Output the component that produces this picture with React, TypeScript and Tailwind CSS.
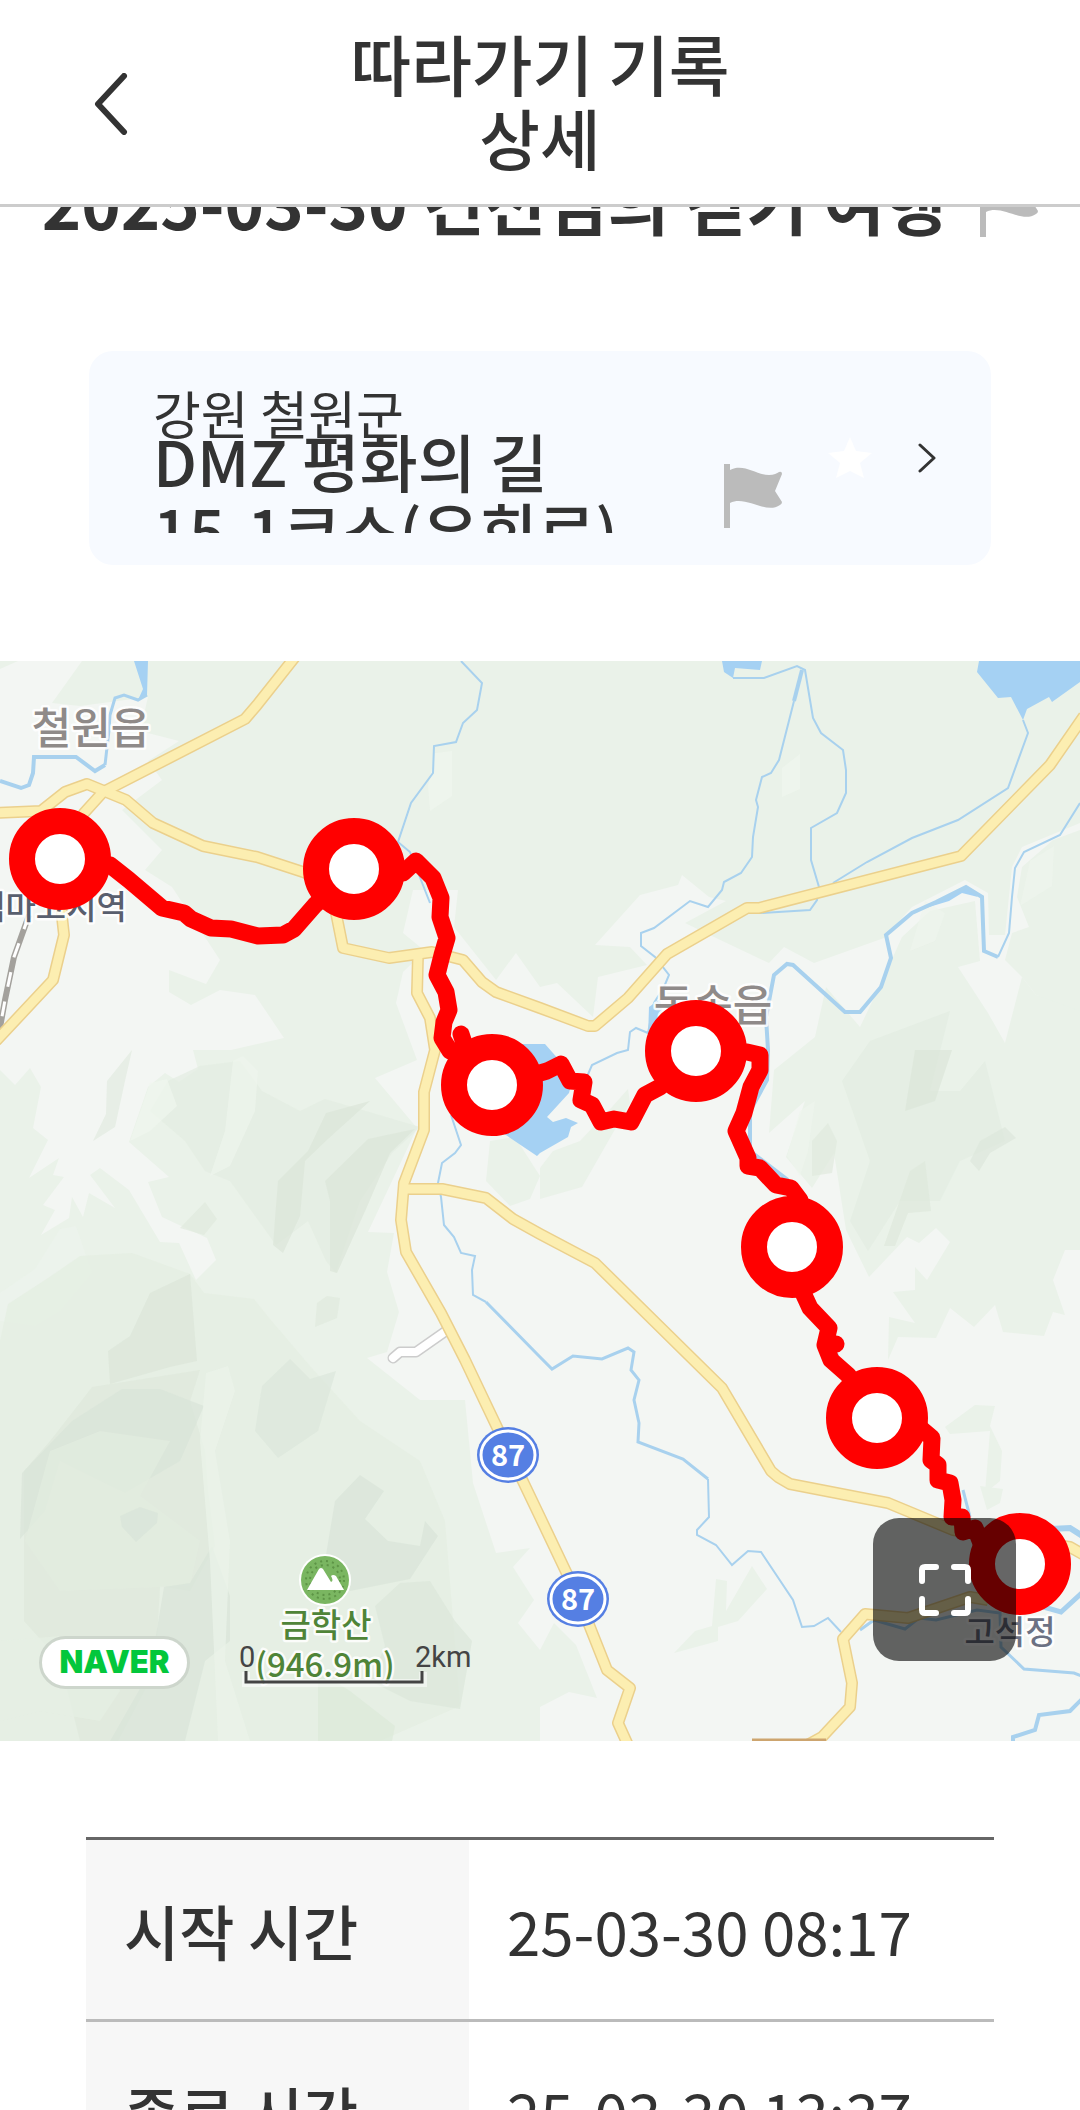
import React from "react";

const hills = [
    { fill: "#e3ece1", d: "M150,450 L168,420 L200,405 L240,400 L262,430 L300,450 L325,438 L420,466 L392,492 L360,540 L336,612 L326,600 L308,560 L276,584 L230,520 L205,510 L185,480 Z" },
    { fill: "#dbe6d9", d: "M308,490 L326,452 L370,440 L328,478 L305,500 L300,555 L283,592 L273,584 L278,520 Z" },
    { fill: "#dbe6d9", d: "M325,520 L368,478 L415,468 L390,492 L366,548 L337,612 L330,610 L330,540 Z" },
    { fill: "#e1ebdf", d: "M132,389 L107,420 L106,453 L93,480 L115,466 L125,420 Z" },
    { fill: "#dfe9dd", d: "M180,567 L205,541 L217,558 L204,574 Z" },
    { fill: "#dfe9dd", d: "M317,642 L327,635 L340,637 L337,657 L315,666 Z" },
    { fill: "#f0f6ee", d: "M130,480 L150,422 L167,418 L177,445 L150,470 Z" },
    { fill: "#eef5ec", d: "M233,400 L243,395 L258,410 L255,450 L230,505 L210,515 L225,470 Z" },
    { fill: "#edf4ec", d: "M0,632 L35,608 L60,568 L76,565 L92,612 L60,650 L35,665 L0,660 Z" },
    { fill: "#e4eee1", d: "M8,643 L48,617 L80,595 L132,592 L190,613 L204,632 L254,638 L270,658 L310,705 L360,760 L420,800 L445,860 L460,1045 L380,1080 L0,1080 L0,680 Z" },
    { fill: "#dbe6d9", d: "M150,632 L190,613 L197,700 L170,706 L110,723 L108,690 L130,675 Z" },
    { fill: "#dee8dc", d: "M82,739 L92,726 L200,709 L190,740 L205,790 L208,830 L215,885 L190,930 L160,925 L155,1010 L118,1080 L80,1080 L60,1000 L24,960 L24,810 L50,780 Z" },
    { fill: "#d9e4d8", d: "M22,812 L72,760 L122,728 L160,728 L204,745 L180,800 L125,832 L90,815 L60,800 L45,850 L20,878 Z" },
    { fill: "#e2ece0", d: "M50,790 L100,770 L170,780 L140,835 L200,880 L190,925 L60,930 L25,880 Z" },
    { fill: "#d9e4d8", d: "M120,855 L140,846 L158,852 L157,862 L136,881 L122,866 Z" },
    { fill: "#d9e4d8", d: "M164,926 L190,922 L212,885 L230,935 L230,980 L205,1000 L185,1080 L110,1080 L150,1010 Z" },
    { fill: "#e6efe4", d: "M0,980 L60,975 L110,1000 L120,1030 L100,1060 L40,1050 L0,1060 Z" },
    { fill: "#ebf4ea", d: "M206,712 L228,705 L235,730 L215,790 L230,880 L225,1000 L250,1080 L218,1080 L210,900 L200,780 Z" },
    { fill: "#dce7db", d: "M262,725 L290,698 L310,718 L336,710 L318,770 L278,797 L255,770 Z" },
    { fill: "#d9e4d8", d: "M335,840 L360,814 L384,830 L365,858 L388,880 L420,885 L425,860 L438,875 L410,918 L350,930 L325,900 Z" },
    { fill: "#dce7da", d: "M375,945 L400,922 L430,920 L455,960 L472,980 L460,1048 L410,1040 L370,1020 L385,985 Z" },
    { fill: "#dbe9d8", d: "M318,1010 L350,1030 L395,1065 L392,1080 L318,1080 Z" },
    { fill: "#e3ece1", d: "M842,420 L870,380 L950,350 L930,430 L960,430 L985,400 L1005,480 L960,500 L940,540 L900,540 L868,590 L850,560 L870,500 Z" },
    { fill: "#dbe6d9", d: "M905,450 L915,389 L952,389 L935,440 Z" },
    { fill: "#dee8dc", d: "M884,585 L910,510 L925,500 L931,550 L908,552 L895,585 Z" },
    { fill: "#dde7db", d: "M970,500 L980,480 L1005,466 L1016,477 L990,492 L979,510 Z" },
    { fill: "#dfe9dd", d: "M812,480 L828,462 L837,480 L832,512 L812,515 Z" },
    { fill: "#eef5ec", d: "M787,495 L800,450 L815,440 L808,490 L800,515 Z" },
    { fill: "#eef5ec", d: "M925,240 L945,252 L935,280 L910,290 Z" },
    { fill: "#eef5ec", d: "M1030,200 L1054,185 L1052,225 L1020,245 Z" },
    { fill: "#eff6ee", d: "M782,107 L800,93 L800,128 L782,136 Z" },
    { fill: "#eff6ee", d: "M435,92 L452,90 L452,135 L430,150 L428,125 Z" },
];

const greens = [
    "M82,0 L52,42 L80,45 L148,36 L140,70 L179,80 L148,100 L162,119 L122,149 L162,189 L145,209 L172,226 L220,299 L206,323 L169,309 L169,331 L191,344 L220,329 L255,334 L284,377 L231,389 L193,389 L198,408 L179,421 L165,412 L148,426 L129,481 L169,516 L148,521 L162,556 L207,577 L216,599 L196,619 L179,582 L160,581 L129,529 L100,507 L90,514 L115,547 L89,532 L83,556 L72,536 L69,557 L41,574 L55,549 L43,544 L64,516 L53,514 L59,497 L29,517 L48,479 L33,467 L41,426 L30,407 L15,424 L0,409 L0,1080 L540,1080 L540,1046 L569,1031 L597,1037 L576,984 L554,962 L540,989 L518,962 L534,939 L513,906 L530,887 L496,892 L473,822 L465,739 L420,739 L367,697 L387,691 L399,651 L387,611 L394,572 L368,571 L417,467 L375,417 L417,399 L396,342 L403,311 L425,290 L403,272 L413,229 L458,229 L454,266 L496,319 L516,292 L540,326 L557,322 L593,356 L598,316 L647,304 L630,286 L595,284 L640,234 L678,224 L682,214 L709,236 L726,240 L685,262 L714,276 L769,302 L784,286 L814,302 L884,277 L912,246 L965,219 L988,232 L989,274 L1005,274 L1012,206 L1022,186 L1080,162 L1080,0 Z",
    "M902,276 L884,316 L860,366 L826,326 L815,376 L774,409 L769,472 L805,440 L786,496 L812,527 L834,492 L846,569 L869,616 L907,576 L919,582 L936,567 L950,581 L927,619 L915,606 L915,629 L893,631 L915,662 L889,656 L888,699 L898,676 L936,677 L950,647 L974,666 L995,644 L1003,671 L1044,675 L1053,651 L1065,654 L1053,619 L1065,589 L1080,589 L1080,345 L1036,334 L1022,316 L1005,382 L988,352 L958,306 L980,300 L975,240 L930,250 Z",
    "M1080,169 L1053,179 L1022,206 L1017,236 L1029,266 L1012,272 L1005,299 L1022,316 L1036,334 L1080,350 Z",
    "M490,480 L515,476 L540,515 L530,538 L510,545 L486,520 Z",
    "M540,507 L553,490 L580,480 L612,446 L628,428 L630,442 L582,526 L540,538 Z",
    "M716,918 L727,920 L726,950 L752,905 L767,928 L738,960 L718,966 L718,980 L674,992 L695,970 L712,965 Z",
    "M945,766 L975,744 L995,745 L990,765 L1002,790 L1000,820 L985,832 L990,770 L950,773 Z",
    "M980,825 L1003,828 L1000,842 L987,849 Z",
    "M0,8 L18,0 L0,0 Z",
];

const lakes = [
    "M979,0 L977,11 L998,37 L1011,36 L1023,59 L1027,48 L1049,36 L1052,41 L1080,21 L1080,0 Z",
    "M722,0 L762,0 L760,9 L735,7 L733,17 L724,11 Z",
    "M500,400 L516,383 L545,383 L560,400 L572,420 L569,432 L547,456 L553,461 L566,457 L578,462 L571,466 L568,476 L540,492 L537,495 L500,470 Z",
    "M134,0 L148,0 L147,34 L138,39 L143,28 Z",
    "M649,346 L660,338 L664,360 L648,377 Z",
    "M916,250 L966,225 L978,236 L962,232 L949,240 Z",
];

const streams = [
    { w: 3, d: "M147,34 L138,39 L124,34 L115,37 L110,54 L109,69 L105,104" },
    { w: 4, d: "M105,104 L95,110 L76,96 L34,96 L33,112 L29,124 L21,127 L0,120" },
    { w: 2, d: "M461,0 L482,22 L477,49 L463,62 L456,81 L434,85 L433,112 L411,142 L398,181 L410,191 L430,242" },
    { w: 2, d: "M733,17 L764,17 L797,5 L805,9 L813,57 L821,72 L843,89 L846,109 L846,132 L837,152 L811,167 L811,199 L819,226 L817,239 L810,249 L760,252" },
    { w: 4, d: "M802,9 L794,40" },
    { w: 2, d: "M794,40 L779,99 L771,112 L762,116 L756,139 L758,146 L753,176 L752,196 L741,212 L724,221 L722,229 L708,246 L690,240 L654,267 L641,272 L641,285 L655,296 L669,314 L664,326 L654,342 L648,372 L636,367 L630,371 L628,389 L617,392 L592,404 L586,418" },
    { w: 2, d: "M1023,59 L1028,72 L1008,127 L958,159 L912,177 L867,201 L833,222" },
    { w: 2, d: "M1080,142 L1060,174 L1024,191 L1015,207 L1012,236 L1009,272 L998,296" },
    { w: 4, d: "M998,296 L984,290 L982,236 L966,226 L936,241 L912,252 L886,274 L891,297 L881,326 L860,351 L845,351 L793,304 L787,303 L774,314 L766,356 L768,389 L767,419 L750,450 L750,490 L788,519" },
    { w: 2, d: "M451,454 L461,484 L455,492 L442,502 L438,522 L441,536 L444,564 L454,576 L461,592 L475,595 L472,609 L473,634 L486,641" },
    { w: 3, d: "M486,641 L540,696 L552,708 L573,695 L602,698 L628,687 L634,691 L631,709 L639,719 L634,739 L639,762 L638,781 L683,798 L708,818" },
    { w: 2, d: "M708,818 L709,856 L697,869 L697,874 L716,884 L732,904 L748,890 L761,891 L793,939 L802,966 L814,965 L828,957 L841,971" },
    { w: 3, d: "M860,969 L874,959 L905,968 L919,957 L936,959 L977,949 L1000,952 L1001,986 L1024,1008 L1074,1012 L1084,1016" },
    { w: 4, d: "M1084,1036 L1070,1050 L1039,1054 L1035,1069 L1013,1076 L1013,1084" },
    { w: 6, d: "M1050,868 L1070,867 L1084,876" },
    { w: 5, d: "M1040,945 L1061,951 L1084,930" },
    { w: 3, d: "M963,829 L970,856" },
    { w: 3, d: "M832,680 L838,696" },
];

const roads = [
    "M295,-4 L257,44 L245,58 L103,131 L84,152 L60,198 L62,256 L64,274 L53,319 L-4,380",
    "M-4,152 L41,150 L65,131 L87,123 L126,139 L153,162 L203,185 L257,196 L303,211 L330,222 L337,257 L343,287 L389,297 L432,291 L463,299 L482,321 L496,331 L540,347 L588,365 L595,365 L628,337 L667,293 L747,247 L759,247 L961,195 L1050,104 L1084,55",
    "M418,294 L417,332 L430,357 L435,389 L424,431 L424,469 L404,522 L401,559 L406,591 L441,652 L465,699 L484,739 L540,856 L578,936 L607,1009 L630,1027 L618,1062 L628,1084",
    "M404,528 L442,528 L486,537 L513,558 L540,573 L595,602 L722,727 L771,810 L778,816 L790,823 L888,842 L953,869 L1070,886 L1084,894",
    "M988,939 L970,936 L908,957 L865,953 L843,978 L852,1022 L850,1046 L822,1076 L800,1088",
];

const track = "M60,198 L110,204 L129,219 L162,247 L184,252 L191,258 L211,267 L231,268 L258,275 L283,274 L294,268 L315,244 L354,208 L403,212 L416,200 L433,217 L441,237 L440,256 L447,277 L442,294 L437,314 L446,331 L449,349 L444,361 L442,377 L450,390 L470,400 L461,373 L470,400 L492,424 L540,412 L547,410 L561,403 L570,420 L584,421 L581,439 L592,444 L601,461 L614,458 L631,461 L645,434 L660,426 L696,390 L747,391 L760,394 L760,409 L751,426 L744,452 L736,470 L748,497 L748,505 L760,507 L776,524 L791,527 L800,539 L792,586 L804,634 L810,647 L829,667 L825,684 L836,683 L825,684 L831,699 L848,714 L877,757 L919,766 L932,777 L931,799 L938,804 L938,819 L950,822 L953,839 L952,856 L962,856 L963,871 L975,867 L981,882 L1020,903";

const stamps = [
    { x: 60, y: 198 },
    { x: 354, y: 208 },
    { x: 492, y: 424 },
    { x: 696, y: 390 },
    { x: 792, y: 586 },
    { x: 877, y: 757 },
    { x: 1020, y: 903 },
];

const routeBadges = [
    { x: 508, y: 794 },
    { x: 578, y: 938 },
];

const records = [
    { label: "시작 시간", value: "25-03-30 08:17" },
    { label: "종료 시간", value: "25-03-30 13:37" },
];

function Flag() {
    return (
        <svg viewBox="0 0 58 64" className="h-[64px] w-[58px] shrink-0 fill-[#bbbbbb]" aria-hidden="true">
            <path d="M0,0 H6 V6 C20,-1 32,11 45,11 C50,11 53,9 55,8 Q58,7 58,10 L51,27 L58,38 Q58,40 56,41 C42,51 22,31 6,39 V64 H0 Z" />
        </svg>
    );
}

function MapLabel({ x, y, size, color, children }: { x: number; y: number; size: number; color: string; children: string }) {
    return (
        <text x={x} y={y} fontSize={size} fill={color} textAnchor="middle" className="font-medium" stroke="#ffffff" strokeOpacity="0.85" strokeWidth="5" strokeLinejoin="round" paintOrder="stroke">
            {children}
        </text>
    );
}

function CourseMap() {
    return (
        <svg viewBox="0 0 1080 1080" className="block h-full w-full" role="img" aria-label="코스 지도">
            <rect width="1080" height="1080" fill="#f3f6f3" />
            {greens.map((d) => <path key={d} d={d} fill="#eaf2e9" />)}
            {hills.map((hill) => <path key={hill.d} d={hill.d} fill={hill.fill} fillOpacity="0.7" />)}

            {/* Water */}
            <g fill="#a5d1f3">
                {lakes.map((d) => <path key={d} d={d} />)}
            </g>
            <g fill="none" stroke="#a8d1ee">
                {streams.map((s) => <path key={s.d} d={s.d} strokeWidth={s.w} />)}
            </g>

            {/* Railway */}
            <g fill="none">
                <path d="M29,254 L14,296 L5,339 L-1,372" stroke="#a3a19c" strokeWidth="6" />
                <path d="M29,254 L14,296 L5,339 L-1,372" stroke="#ffffff" strokeWidth="3" strokeDasharray="15 15" />
            </g>

            {/* Roads */}
            <g fill="none" strokeLinejoin="round">
                <path d="M446,670 L416,691 L400,691 L393,697" stroke="#cccccc" strokeWidth="11" strokeLinecap="round" />
                <path d="M446,670 L416,691 L400,691 L393,697" stroke="#ffffff" strokeWidth="8" strokeLinecap="round" />
                {roads.map((d) => <path key={d} d={d} stroke="#ebd08c" strokeWidth="12" />)}
                {roads.map((d) => <path key={d} d={d} stroke="#fceeb1" strokeWidth="9" />)}
                <path d="M752,1079 H826" stroke="#cda56f" strokeWidth="3" />
            </g>

            {routeBadges.map((badge) => (
                <g key={badge.x}>
                    <ellipse cx={badge.x} cy={badge.y} rx="31" ry="28" fill="#557fe3" />
                    <ellipse cx={badge.x} cy={badge.y} rx="27" ry="24" fill="#557fe3" stroke="#ffffff" strokeWidth="3" />
                    <text x={badge.x} y={badge.y + 11} fontSize="29" fill="#ffffff" textAnchor="middle" className="font-bold">87</text>
                </g>
            ))}

            {/* Peak */}
            <circle cx="325" cy="919" r="26" fill="#ffffff" />
            <circle cx="325" cy="919" r="24" fill="#7ab661" />
            <circle cx="325" cy="919" r="19" fill="none" stroke="#5d9446" strokeWidth="2" strokeDasharray="2 4" />
            <circle cx="325" cy="919" r="15" fill="none" stroke="#5d9446" strokeWidth="2" strokeDasharray="2 4" />
            <path d="M307,929 L319,908 Q321,906 323,908 L331,921 Q334,920 331,915 Q333,913 336,915 L344,929 Z" fill="#ffffff" />

            <MapLabel x={91} y={83} size={43} color="#8f8a89">철원읍</MapLabel>
            <MapLabel x={51} y={258} size={33} color="#595f6e">백마고지역</MapLabel>
            <MapLabel x={713} y={360} size={43} color="#8f8a89">동송읍</MapLabel>
            <MapLabel x={1010} y={983} size={33} color="#6c7183">고석정</MapLabel>
            <MapLabel x={326} y={976} size={33} color="#4f8438">금학산</MapLabel>
            <MapLabel x={325} y={1016} size={33} color="#4f8438">(946.9m)</MapLabel>

            {/* Walked track and stamp points */}
            <path d={track} fill="none" stroke="#ff0000" strokeWidth="17" strokeLinejoin="round" strokeLinecap="round" />
            {stamps.map((stamp) => (
                <circle key={stamp.x} cx={stamp.x} cy={stamp.y} r="38" fill="#ffffff" stroke="#ff0000" strokeWidth="26" />
            ))}

            {/* Scale bar */}
            <path d="M246,1011 V1022 H423 V1011" fill="none" stroke="#ffffff" strokeOpacity="0.5" strokeWidth="8" />
            <path d="M246,1010 V1021 H422 V1010" fill="none" stroke="#444444" strokeWidth="3" />
            <g fontSize="29" fill="#444444" fontFamily="Roboto, sans-serif">
                <text x="239" y="1006">0</text>
                <text x="415" y="1006">2km</text>
            </g>
        </svg>
    );
}

export default function App() {
    return (
        <div className="flex h-screen flex-col overflow-hidden bg-white font-['Noto_Sans_CJK_KR',sans-serif] text-[#333333]">
            <header className="flex shrink-0 items-center border-b-[3px] border-[#cccccc] px-[86px] py-[25px]">
                <button type="button" aria-label="뒤로" className="flex w-[200px] items-center pt-1 pl-[8px]">
                    <svg viewBox="0 0 34 62" className="h-[62px] w-[34px]" fill="none" stroke="#333333" strokeWidth="6" strokeLinecap="round" strokeLinejoin="round">
                        <path d="M30,3 L4,31 L30,59" />
                    </svg>
                </button>
                <h1 className="flex-1 pb-[6px] text-center text-[66px] leading-[74px] font-medium">
                    따라가기 기록<br />상세
                </h1>
                <div className="w-[200px]" />
            </header>

            <main className="min-h-0 flex-1 overflow-hidden">
                {/* Record title, scrolled under the header */}
                <div className="flex h-[30px] items-end justify-center gap-[34px] overflow-hidden">
                    <h2 className="text-[67px] leading-[72px] font-bold whitespace-nowrap">2025-03-30 건선님의 걷기 여행</h2>
                    <Flag />
                </div>

                <a href="#course" className="mx-[89px] mt-[114px] flex rounded-[24px] bg-[#f7faff] py-8 pr-[55px] pl-[64px]">
                    <div className="h-[150px] w-[540px] overflow-hidden pt-[18px]">
                        <p className="text-[52px] leading-[24px] font-normal">강원 철원군</p>
                        <p className="text-[63px] leading-[69px] font-medium">DMZ 평화의 길<br />15-1코스(우회로)</p>
                    </div>
                    <div className="flex flex-1 items-center justify-between">
                        <div className="mt-[76px] ml-[31px]">
                            <Flag />
                        </div>
                        <svg viewBox="0 0 44 42" className="h-[42px] w-[44px] fill-white" aria-hidden="true">
                            <path d="M22,0 L28,14 L44,16 L32,26 L36,41 L22,34 L8,41 L12,26 L0,16 L16,14 Z" />
                        </svg>
                        <svg viewBox="0 0 18 30" className="h-[30px] w-[18px]" fill="none" stroke="#333333" strokeWidth="3" strokeLinecap="round" strokeLinejoin="round" aria-hidden="true">
                            <path d="M2,2 L16,15 L2,28" />
                        </svg>
                    </div>
                </a>

                <section className="relative mt-24 aspect-square w-full">
                    <CourseMap />
                    <a href="#naver" className="absolute bottom-[52px] left-[39px] flex h-[53px] w-[151px] items-center justify-center rounded-full border-[3px] border-[#cdd6cc] bg-white font-[Inter,sans-serif] text-[31px] font-black text-[#03c73c]">
                        NAVER
                    </a>
                    <button type="button" aria-label="전체 화면" className="absolute right-[64px] bottom-[80px] flex h-[143px] w-[143px] items-center justify-center rounded-[26px] bg-black/60">
                        <svg viewBox="0 0 52 52" className="h-[52px] w-[52px]" fill="none" stroke="#ffffff" strokeWidth="6" strokeLinecap="round" strokeLinejoin="round">
                            <path d="M3,17 V6 Q3,3 6,3 H17 M35,3 H46 Q49,3 49,6 V17 M49,35 V46 Q49,49 46,49 H35 M17,49 H6 Q3,49 3,46 V35" />
                        </svg>
                    </button>
                </section>

                <div className="mt-24 px-[86px]">
                    <table className="w-full border-t-[3px] border-[#666666] text-left text-[60px]">
                        <tbody>
                            {records.map((record) => (
                                <tr key={record.label} className="h-[182px] border-b-[3px] border-[#bbbbbb]">
                                    <th scope="row" className="w-[383px] bg-[#f7f7f7] pl-[38px] font-medium">{record.label}</th>
                                    <td className="pl-[38px] font-normal">{record.value}</td>
                                </tr>
                            ))}
                        </tbody>
                    </table>
                </div>
            </main>
        </div>
    );
}
